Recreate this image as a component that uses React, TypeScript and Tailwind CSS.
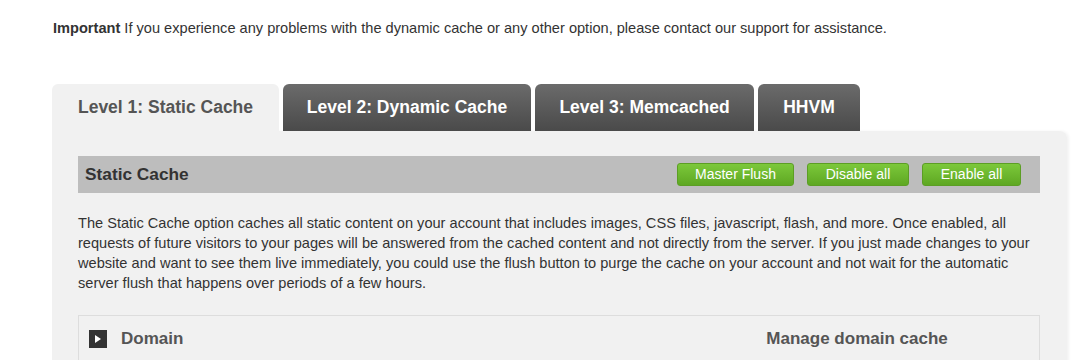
const tabs = [
  { label: "Level 1: Static Cache", w: "w-[227px]", active: true },
  { label: "Level 2: Dynamic Cache", w: "w-[248px]", active: false },
  { label: "Level 3: Memcached", w: "w-[219px]", active: false },
  { label: "HHVM", w: "w-[102px]", active: false },
];

const buttons = [
  { label: "Master Flush", w: "w-[117px]" },
  { label: "Disable all", w: "w-[102px]" },
  { label: "Enable all", w: "w-[99px]" },
];

export default function App() {
  return (
    <div className="min-h-[360px] bg-white font-['Liberation_Sans',Arial,sans-serif] text-[#333]">
      <p className="pl-[53px] pt-[18px] text-[14.6px] leading-[20px]">
        <b>Important</b> If you experience any problems with the dynamic cache or any other option, please contact our support for assistance.
      </p>

      <div className="ml-[52px] mt-[46px] w-[1015px]">
        <div className="flex gap-[4px]">
          {tabs.map((t) => (
            <div
              key={t.label}
              className={`${t.w} h-[47px] shrink-0 rounded-t-[6px] pt-[12px] text-center text-[17.5px] font-bold leading-[22px] ${
                t.active
                  ? "bg-[#f1f1f1] text-[#555]"
                  : "bg-gradient-to-b from-[#6b6b6b] to-[#4a4a4a] text-white"
              }`}
            >
              {t.label}
            </div>
          ))}
        </div>

        <div className="rounded-tr-[8px] bg-[#f1f1f1] px-[26px] pb-8 pt-[25px] shadow-[2px_0_3px_rgba(0,0,0,0.05)]">
          <div className="flex h-[37px] w-[962px] items-center justify-between bg-[#bdbdbd] pl-[7px] pr-[19px]">
            <span className="text-[17.3px] font-bold text-[#333]">Static Cache</span>
            <div className="flex gap-[13px]">
              {buttons.map((b) => (
                <button
                  key={b.label}
                  className={`${b.w} h-[23px] rounded-[3px] border border-[#5c9e24] bg-gradient-to-b from-[#7cc83a] to-[#5ea822] text-[14px] leading-[21px] text-white`}
                >
                  {b.label}
                </button>
              ))}
            </div>
          </div>

          <p className="mt-[20px] w-[962px] text-[14.6px] leading-[20px] text-[#333]">
            The Static Cache option caches all static content on your account that includes images, CSS files, javascript, flash, and more. Once enabled, all requests of future visitors to your pages will be answered from the cached content and not directly from the server. If you just made changes to your website and want to see them live immediately, you could use the flush button to purge the cache on your account and not wait for the automatic server flush that happens over periods of a few hours.
          </p>

          <div className="mt-[22px] flex h-[48px] w-[962px] items-center border border-[#dddddd] pl-[10px]">
            <span className="flex h-[18px] w-[18px] items-center justify-center bg-[#333]">
              <svg width="6" height="8" viewBox="0 0 6 8">
                <path d="M0 0L6 4L0 8Z" fill="#fff" />
              </svg>
            </span>
            <span className="ml-[14px] text-[17px] font-bold text-[#555]">Domain</span>
            <span className="ml-[583px] text-[17px] font-bold text-[#555]">Manage domain cache</span>
          </div>
        </div>
      </div>
    </div>
  );
}
